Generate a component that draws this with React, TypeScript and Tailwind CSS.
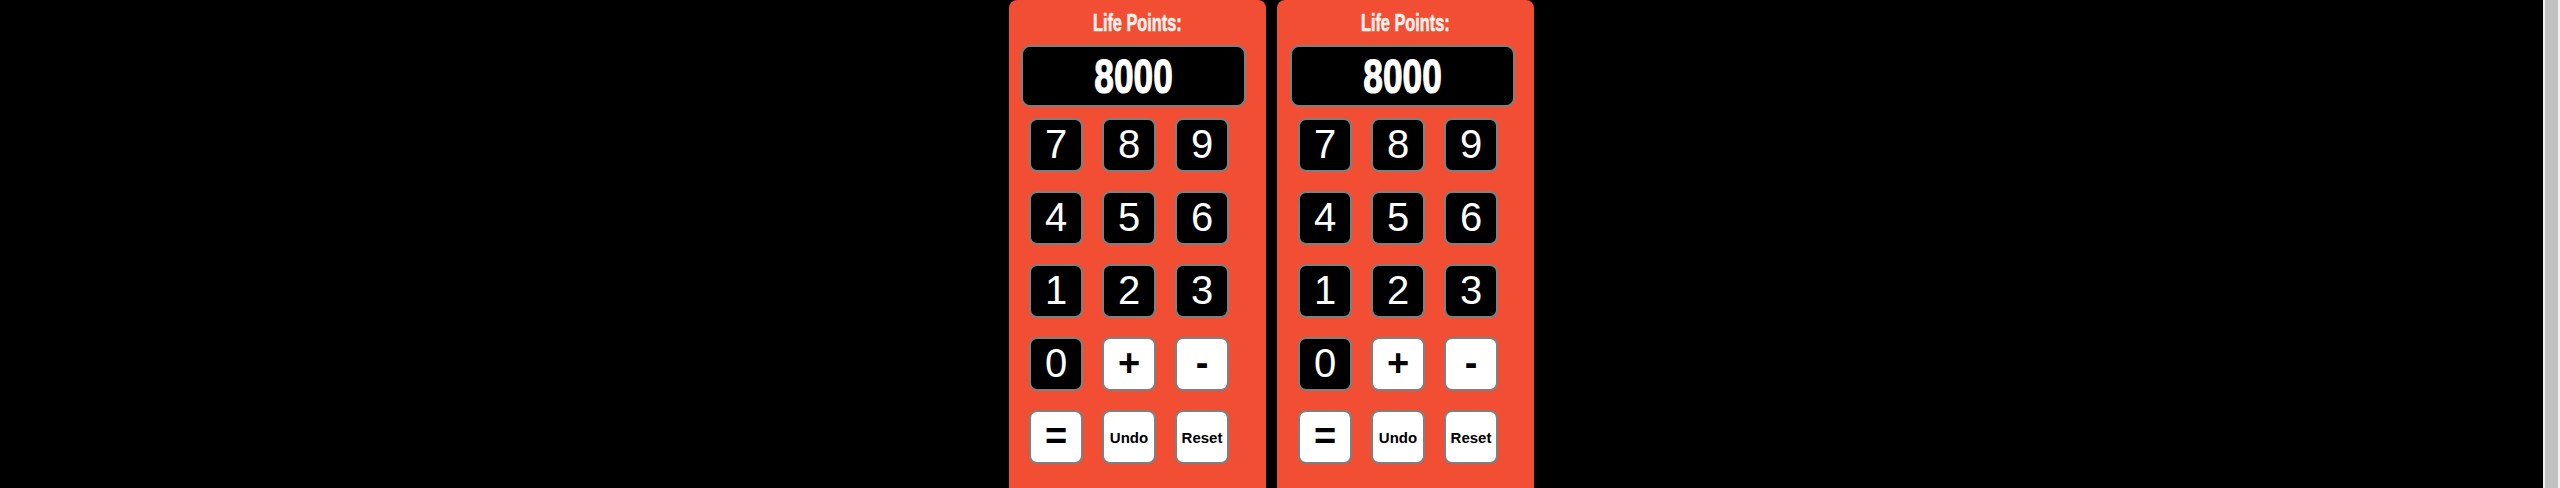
import React from "react";

type Key = { label: string; dark?: boolean; small?: boolean };

const keys: Key[] = [
  { label: "7", dark: true },
  { label: "8", dark: true },
  { label: "9", dark: true },
  { label: "4", dark: true },
  { label: "5", dark: true },
  { label: "6", dark: true },
  { label: "1", dark: true },
  { label: "2", dark: true },
  { label: "3", dark: true },
  { label: "0", dark: true },
  { label: "+" },
  { label: "-" },
  { label: "=" },
  { label: "Undo", small: true },
  { label: "Reset", small: true },
];

function KeyButton({ k }: { k: Key }) {
  const base =
    "w-[54px] h-[54px] rounded-[8px] border-2 border-[#7f7f7f] flex items-center justify-center font-['Liberation_Sans',Arial,sans-serif] leading-none";
  if (k.dark) {
    return (
      <button className={`${base} bg-black text-white text-[40px] pb-[3px]`}>
        {k.label}
      </button>
    );
  }
  if (k.small) {
    return (
      <button className={`${base} bg-white text-black text-[15px] font-bold`}>
        {k.label}
      </button>
    );
  }
  return (
    <button className={`${base} bg-white text-black text-[38px] font-bold pb-[3px]`}>
      {k.label}
    </button>
  );
}

function Counter({ second }: { second?: boolean }) {
  return (
    <div className="w-[257px] h-[520px] shrink-0 rounded-[8px] bg-[#f14e33]">
      <div className="pt-[11px] h-[35px] mb-[10px] flex justify-center">
        <span className="block scale-x-[0.68] text-[24px] leading-[24px] font-bold text-[#fdf1ec] [-webkit-text-stroke:0.6px_#fdf1ec] font-['Liberation_Sans_Narrow','Liberation_Sans',Arial,sans-serif]">
          Life Points:
        </span>
      </div>
      <div
        className={`${second ? "ml-[13px]" : "ml-[12px]"} w-[225px] h-[62px] rounded-[9px] border-2 border-[#7f7f7f] bg-black flex items-center justify-center`}
      >
        <span className="block scale-x-[0.72] text-[49px] leading-none font-bold text-white [-webkit-text-stroke:1.2px_white] font-['Liberation_Sans_Narrow','Liberation_Sans',Arial,sans-serif]">
          8000
        </span>
      </div>
      <div
        className={`${second ? "ml-[21px]" : "ml-[20px]"} mt-[11px] grid grid-cols-[repeat(3,54px)] gap-x-[19px] gap-y-[19px]`}
      >
        {keys.map((k) => (
          <KeyButton key={k.label} k={k} />
        ))}
      </div>
    </div>
  );
}

export default function App() {
  return (
    <div className="flex h-[488px] overflow-hidden bg-black">
      <div className="flex-1 flex justify-center gap-[11px]">
        <Counter />
        <Counter second />
      </div>
      {/* page scrollbar */}
      <div className="w-[17px] shrink-0 bg-[#f1f1f1] px-[2px]">
        <div className="h-full bg-[#c1c1c1]" />
      </div>
    </div>
  );
}
